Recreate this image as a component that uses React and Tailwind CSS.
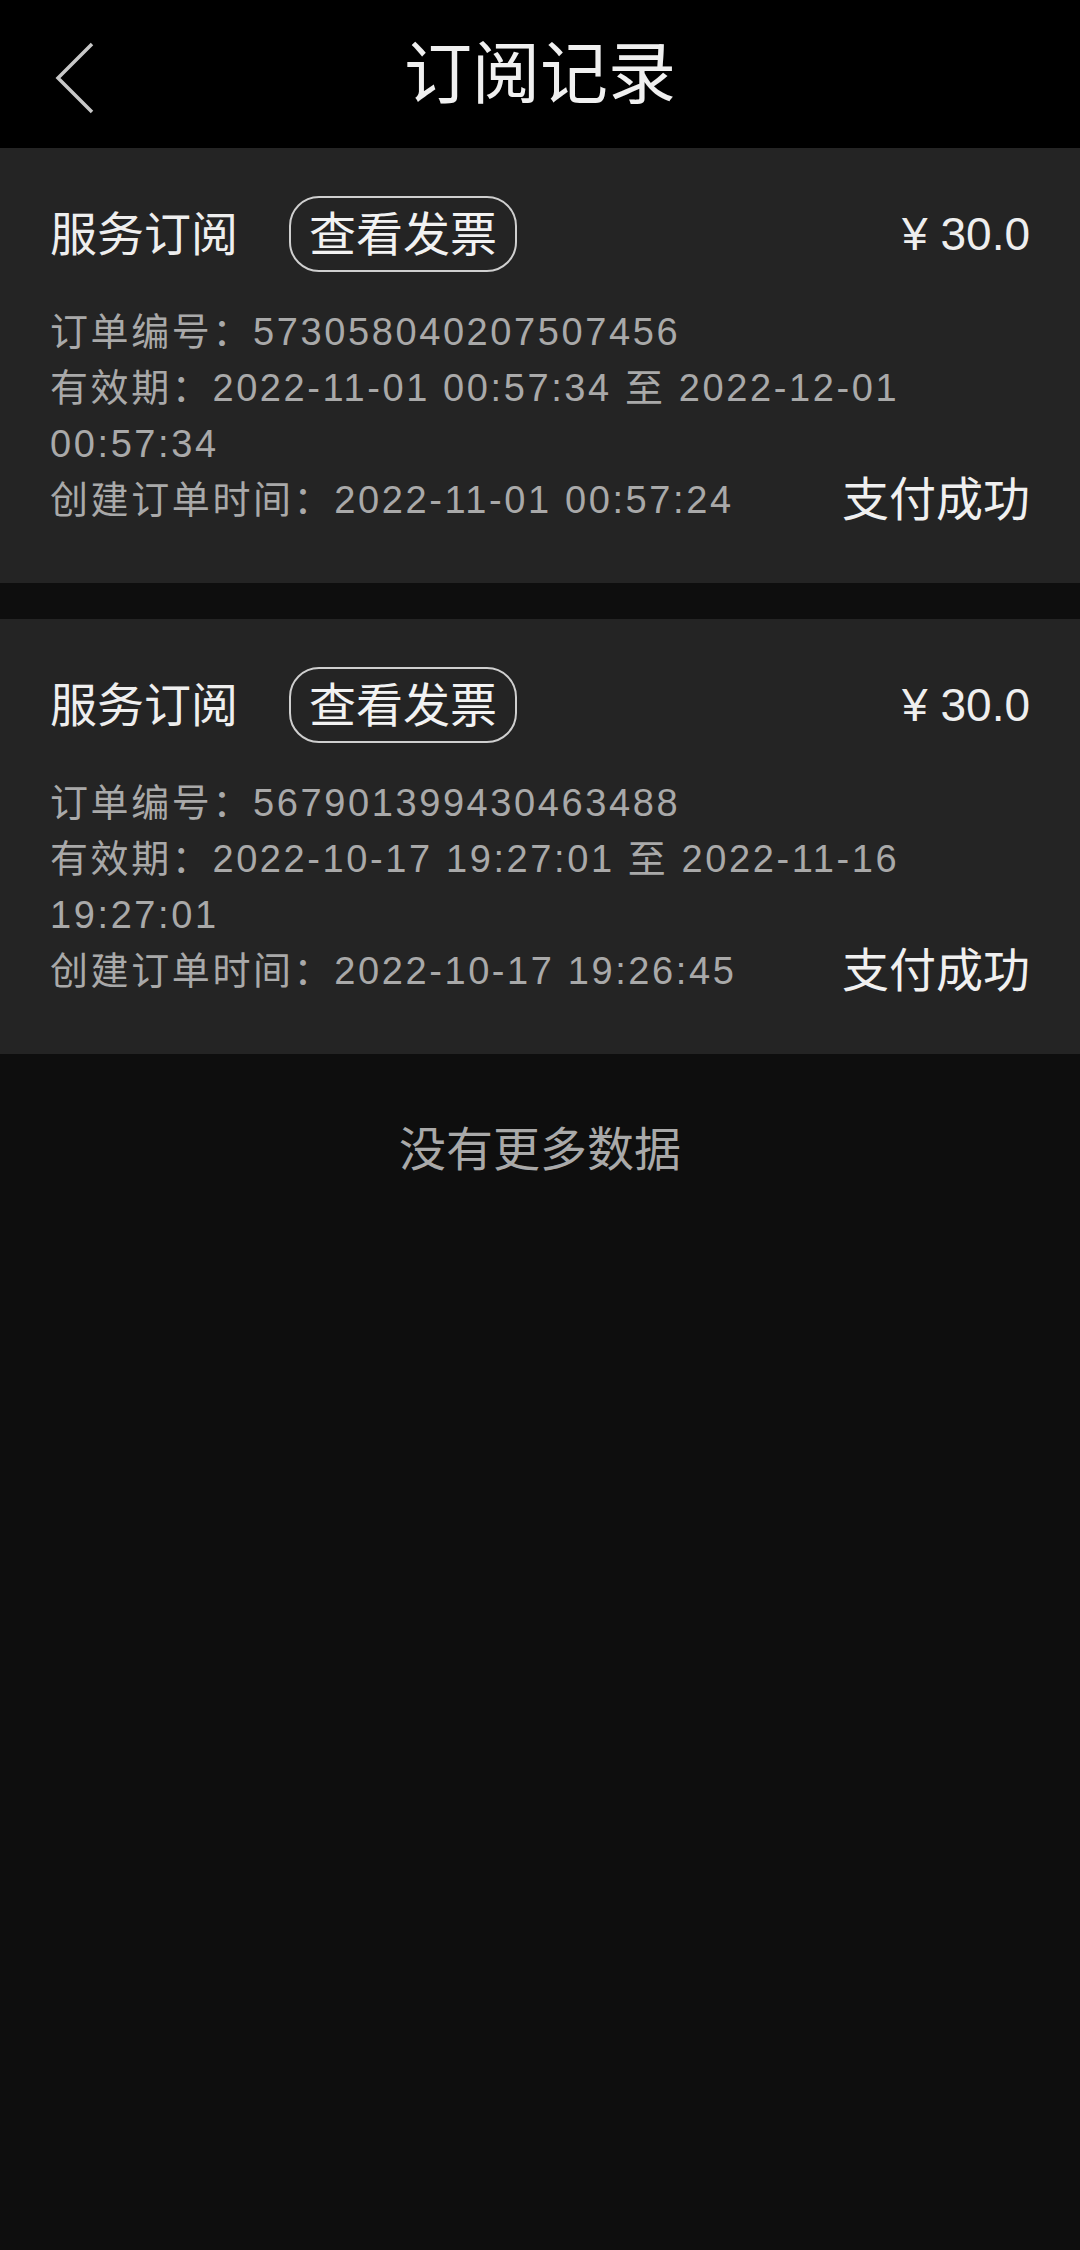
import React from 'react';

const orders = [
    {
        id: '573058040207507456',
        from: '2022-11-01 00:57:34',
        to: '2022-12-01 00:57:34',
        created: '2022-11-01 00:57:24',
        price: '30.0',
    },
    {
        id: '567901399430463488',
        from: '2022-10-17 19:27:01',
        to: '2022-11-16 19:27:01',
        created: '2022-10-17 19:26:45',
        price: '30.0',
    },
];

const font = { fontFamily: '"Liberation Sans", "Noto Sans CJK SC", sans-serif' };

const OrderCard = ({ order }) => (
    <div className="bg-[#242424] px-[50px] pt-[48px] pb-[55px]">
        {/* Title row */}
        <div className="flex items-center justify-between">
            <div className="flex items-center">
                <span className="text-[47px] leading-none text-[#eeeeee]">服务订阅</span>
                <button className="ml-[51px] h-[76px] px-[18px] rounded-[30px] border-2 border-[#cfcfcf] text-[47px] leading-none text-[#f2f2f2]">
                    查看发票
                </button>
            </div>
            <span className="text-[46px] leading-none text-[#eeeeee]">¥ {order.price}</span>
        </div>

        {/* Details */}
        <div className="mt-[32px] text-[38px] leading-[56px] tracking-[2.6px] text-[#a9a9a9]">
            <div>订单编号：{order.id}</div>
            <div>有效期：{order.from} 至 {order.to}</div>
            <div className="flex items-center justify-between">
                <span>创建订单时间：{order.created}</span>
                <span className="text-[47px] tracking-normal text-[#f0f0f0]">支付成功</span>
            </div>
        </div>
    </div>
);

const App = () => {
    return (
        <div className="min-h-screen bg-[#0e0e0e]" style={font}>
            {/* Header */}
            <div className="h-[148px] bg-black flex items-center justify-center relative">
                <svg className="absolute left-[54px] top-[42px]" width="42" height="72" viewBox="0 0 42 72" fill="none">
                    <polyline points="38,2 4,36 38,70" stroke="#c8c8c8" strokeWidth="3.5" />
                </svg>
                <h1 className="text-[68px] leading-none text-[#f0f0f0] font-normal">订阅记录</h1>
            </div>

            <div className="flex flex-col gap-[36px]">
                {orders.map((o) => (
                    <OrderCard key={o.id} order={o} />
                ))}
            </div>

            <div className="pt-[72px] text-center text-[47px] leading-none text-[#a9a9a9]">没有更多数据</div>
        </div>
    );
};

export default App;
